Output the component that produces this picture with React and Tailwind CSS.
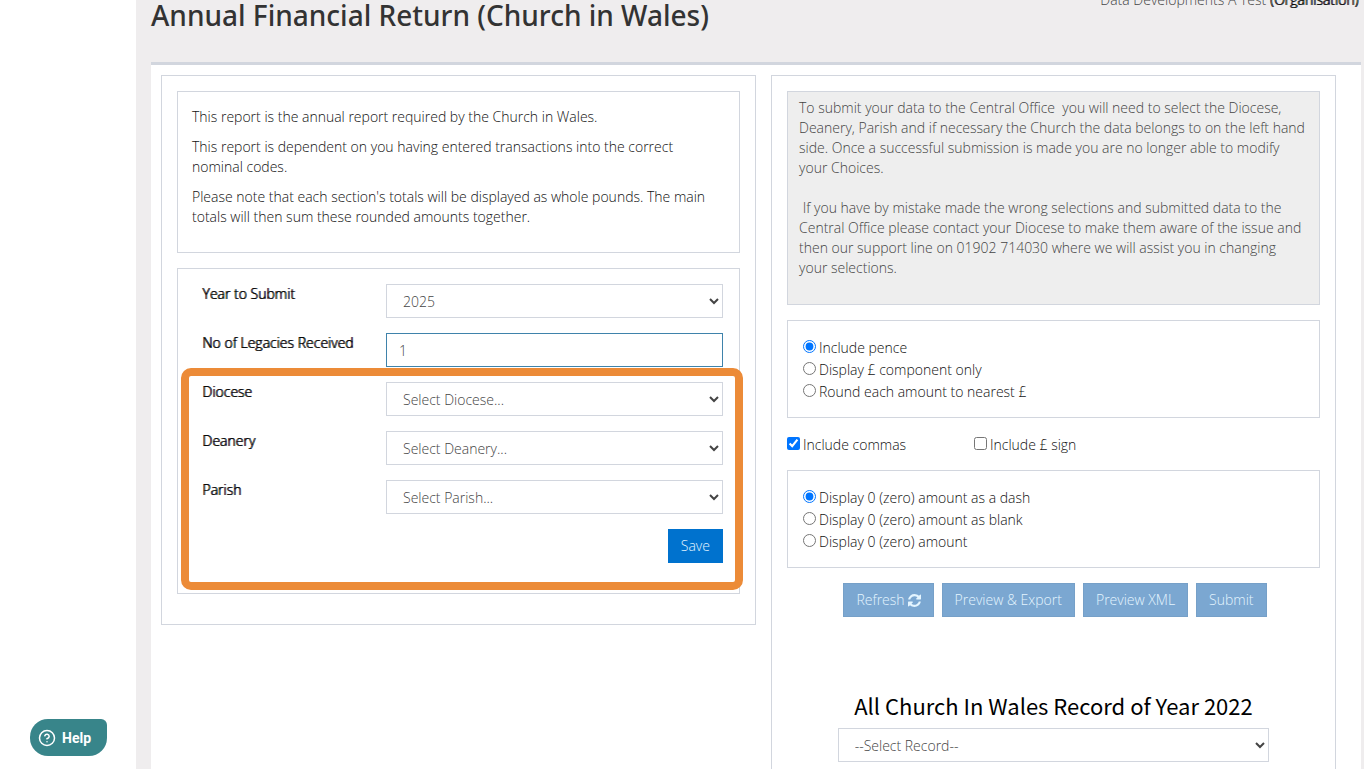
import { useState } from "react";
import { CircleHelp } from "lucide-react";

const submitNote = `To submit your data to the Central Office  you will need to select the Diocese, Deanery, Parish and if necessary the Church the data belongs to on the left hand side. Once a successful submission is made you are no longer able to modify your Choices.

 If you have by mistake made the wrong selections and submitted data to the Central Office please contact your Diocese to make them aware of the issue and then our support line on 01902 714030 where we will assist you in changing your selections.`;

const penceOptions = [
  "Include pence",
  "Display £ component only",
  "Round each amount to nearest £",
];

const zeroOptions = [
  "Display 0 (zero) amount as a dash",
  "Display 0 (zero) amount as blank",
  "Display 0 (zero) amount",
];

const selectClass =
  "h-[34px] w-full border border-[#d2d6de] bg-white px-3 text-[#444] focus:outline-none";

function RefreshIcon() {
  return (
    <svg viewBox="0 0 1536 1536" className="size-[13px]" fill="currentColor" aria-hidden="true">
      <path d="M1511 928q0 5-1 7-64 268-268 434.500t-478 166.500q-146 0-282.500-55t-243.500-157l-129 129q-19 19-45 19t-45-19-19-45v-448q0-26 19-45t45-19h448q26 0 45 19t19 45-19 45l-137 137q71 66 161 102t187 36q134 0 250-65t186-179q11-17 53-117 8-23 30-23h192q13 0 22.500 9.500t9.500 22.500zm25-800v448q0 26-19 45t-45 19h-448q-26 0-45-19t-19-45 19-45l138-138q-148-137-349-137-134 0-250 65t-186 179q-11 17-53 117-8 23-30 23h-199q-13 0-22.500-9.500t-9.500-22.500v-7q65-268 270-434.500t480-166.500q146 0 284 55.500t245 156.500l130-129q19-19 45-19t45 19 19 45z" />
    </svg>
  );
}

function FormRow({ id, label, children }) {
  return (
    <div className="grid grid-cols-[184fr_337fr] items-start">
      <label htmlFor={id} className="text-black [text-shadow:1px_0_black]">
        {label}
      </label>
      {children}
    </div>
  );
}

function SelectRow({ id, label, option }) {
  return (
    <FormRow id={id} label={label}>
      <select id={id} className={selectClass}>
        <option>{option}</option>
      </select>
    </FormRow>
  );
}

function RadioBox({ name, options }) {
  const [selected, setSelected] = useState(options[0]);

  return (
    <div className="border border-[#d2d6de] px-[15px] pt-4 pb-[14px]">
      {options.map((option) => (
        <label key={option} className="flex h-[22px] items-center gap-[3px]">
          <input
            type="radio"
            name={name}
            className="mb-[3px] size-[13px]"
            checked={selected === option}
            onChange={() => setSelected(option)}
          />
          {option}
        </label>
      ))}
    </div>
  );
}

function CheckOption({ label, checked }) {
  return (
    <label className="flex h-[22px] items-center gap-[3px]">
      <input type="checkbox" className="mb-[3px] size-[13px]" defaultChecked={checked} />
      {label}
    </label>
  );
}

function ActionButton({ children }) {
  return (
    <button
      disabled
      className="flex h-[34px] items-center gap-[3px] border border-[#76a0c8] bg-[#7ba7d1] px-3 text-[#e4f5ff]"
    >
      {children}
    </button>
  );
}

function App() {
  const [legacies, setLegacies] = useState("1");

  return (
    <div className="flex h-screen overflow-hidden bg-white font-['Open_Sans',sans-serif] text-[14px] leading-[20px] font-light text-[#111]">
      <aside className="w-[136px] shrink-0">
        <button className="fixed bottom-[13px] left-[30px] flex h-[37px] items-center gap-[6px] rounded-[18px] rounded-tr-[6px] bg-[#38858a] pr-4 pl-2 font-['Roboto',sans-serif] text-[14px] font-bold text-white">
          <CircleHelp size={18} strokeWidth={2} />
          Help
        </button>
      </aside>

      <div className="flex-1 bg-[#efedee] pr-[3px] pl-[15px]">
        <header className="-mt-[10px] flex h-[72px] items-start justify-between">
          <h1 className="font-['Noto_Sans',sans-serif] text-[28px] leading-[50px] font-medium text-[#333]">
            Annual Financial Return (Church in Wales)
          </h1>
          <p className="pr-[3px] text-[#444]">
            Data Developments A Test{" "}
            <span className="text-black [text-shadow:1px_0_black]">(Organisation)</span>
          </p>
        </header>

        <main className="grid min-h-screen grid-cols-[595fr_565fr] items-start gap-[15px] border-t-[3px] border-[#d2d6de] bg-white pt-[10px] pr-[25px] pl-[10px]">
          <section className="flex flex-col gap-[15px] border border-[#d2d6de] p-[15px] pb-[30px]">
            <div className="space-y-[10px] border border-[#d2d6de] px-[14px] pt-[15px] pb-[25px]">
              <p>This report is the annual report required by the Church in Wales.</p>
              <p>
                This report is dependent on you having entered transactions into the correct
                nominal codes.
              </p>
              <p>
                Please note that each section's totals will be displayed as whole pounds. The main
                totals will then sum these rounded amounts together.
              </p>
            </div>

            <form
              className="relative flex flex-col gap-[15px] border border-[#d2d6de] pt-[15px] pr-[16px] pb-[30px] pl-[24px]"
              onSubmit={(e) => e.preventDefault()}
            >
              <SelectRow id="year" label="Year to Submit" option="2025" />
              <FormRow id="legacies" label="No of Legacies Received">
                <input
                  id="legacies"
                  type="text"
                  value={legacies}
                  onChange={(e) => setLegacies(e.target.value)}
                  className="h-[34px] w-full border border-[#3f83ab] px-3 text-[#444] focus:outline-none"
                />
              </FormRow>
              <SelectRow id="diocese" label="Diocese" option="Select Diocese..." />
              <SelectRow id="deanery" label="Deanery" option="Select Deanery..." />
              <SelectRow id="parish" label="Parish" option="Select Parish..." />
              <button className="h-[34px] self-end bg-[#0072ce] px-[13px] text-[#e4f5ff]">
                Save
              </button>
              <div className="pointer-events-none absolute top-[99px] -right-1 bottom-[3px] left-[3px] rounded-[10px] border-8 border-[#ec8b38]" />
            </form>
          </section>

          <section className="flex flex-col gap-[15px] border border-[#d2d6de] p-[15px] pb-[60px]">
            <textarea
              readOnly
              aria-label="Submission notes"
              value={submitNote}
              className="h-[214px] resize-none border border-[#d2d6de] bg-[#eee] py-[6px] pr-[14px] pl-[11px] text-[#444] focus:outline-none"
            />
            <RadioBox name="pence" options={penceOptions} />
            <div className="grid grid-cols-[187fr_346fr] pt-px">
              <CheckOption label="Include commas" checked />
              <CheckOption label="Include £ sign" />
            </div>
            <div className="-mt-px">
              <RadioBox name="zero" options={zeroOptions} />
            </div>
            <div className="flex justify-center gap-2 pl-[3px]">
              <ActionButton>
                Refresh <RefreshIcon />
              </ActionButton>
              <ActionButton>Preview &amp; Export</ActionButton>
              <ActionButton>Preview XML</ActionButton>
              <ActionButton>Submit</ActionButton>
            </div>
            <div className="mx-auto mt-[58px] w-[81%]">
              <h2 className="mb-2 text-center font-['Noto_Sans_CJK_JP',sans-serif] text-[22px] leading-[30px] font-normal text-black">
                All Church In Wales Record of Year 2022
              </h2>
              <select aria-label="Record" className={selectClass}>
                <option>--Select Record--</option>
              </select>
            </div>
          </section>
        </main>
      </div>
    </div>
  );
}

export default App;
